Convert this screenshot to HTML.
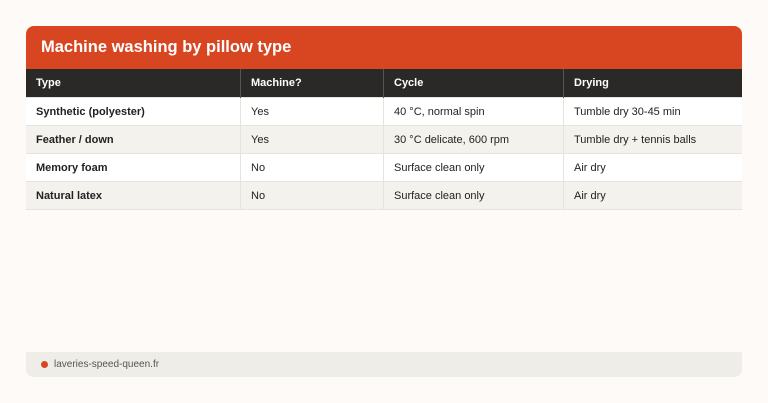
<!DOCTYPE html>
<html><head><style>
body{margin:0;width:768px;height:403px;background:#fdfaf7;font-family:"Liberation Sans",sans-serif;position:relative;overflow:hidden}
.card{position:absolute;left:26px;top:26px;width:716px}
.hd{background:#d84621;height:43px;border-radius:8px 8px 0 0;color:#fff;font-weight:bold;font-size:16.5px;line-height:43px;padding-left:15px;box-sizing:border-box}
table{border-collapse:collapse;width:716px;font-size:11px;color:#222}
td,th{padding:0 0 0 10px;text-align:left;height:27px;border-left:1px solid #e6e2dc}
td:first-child,th:first-child{border-left:none}
th{background:#2b2927;color:#fff;font-weight:bold;height:28px;border-left:1px solid #555}
tr{border-bottom:1px solid #e6e2dc}
tr.a{background:#fff}tr.b{background:#f4f2ed}
td:first-child{font-weight:bold}
.ft{position:absolute;left:26px;top:352px;width:716px;height:25px;background:#efede8;border-radius:0 0 8px 8px;font-size:10px;color:#555;line-height:25px}
.ft i{display:inline-block;width:7px;height:7px;border-radius:50%;background:#d84621;margin:0 6px 0 15px;vertical-align:-0.5px}
</style></head><body>
<div class="card"><div class="hd">Machine washing by pillow type</div>
<table>
<tr><th style="width:204px">Type</th><th style="width:132px">Machine?</th><th style="width:169px">Cycle</th><th>Drying</th></tr>
<tr class="a"><td>Synthetic (polyester)</td><td>Yes</td><td>40 °C, normal spin</td><td>Tumble dry 30-45 min</td></tr>
<tr class="b"><td>Feather / down</td><td>Yes</td><td>30 °C delicate, 600 rpm</td><td>Tumble dry + tennis balls</td></tr>
<tr class="a"><td>Memory foam</td><td>No</td><td>Surface clean only</td><td>Air dry</td></tr>
<tr class="b"><td>Natural latex</td><td>No</td><td>Surface clean only</td><td>Air dry</td></tr>
</table></div>
<div class="ft"><i></i>laveries-speed-queen.fr</div>
</body></html>
